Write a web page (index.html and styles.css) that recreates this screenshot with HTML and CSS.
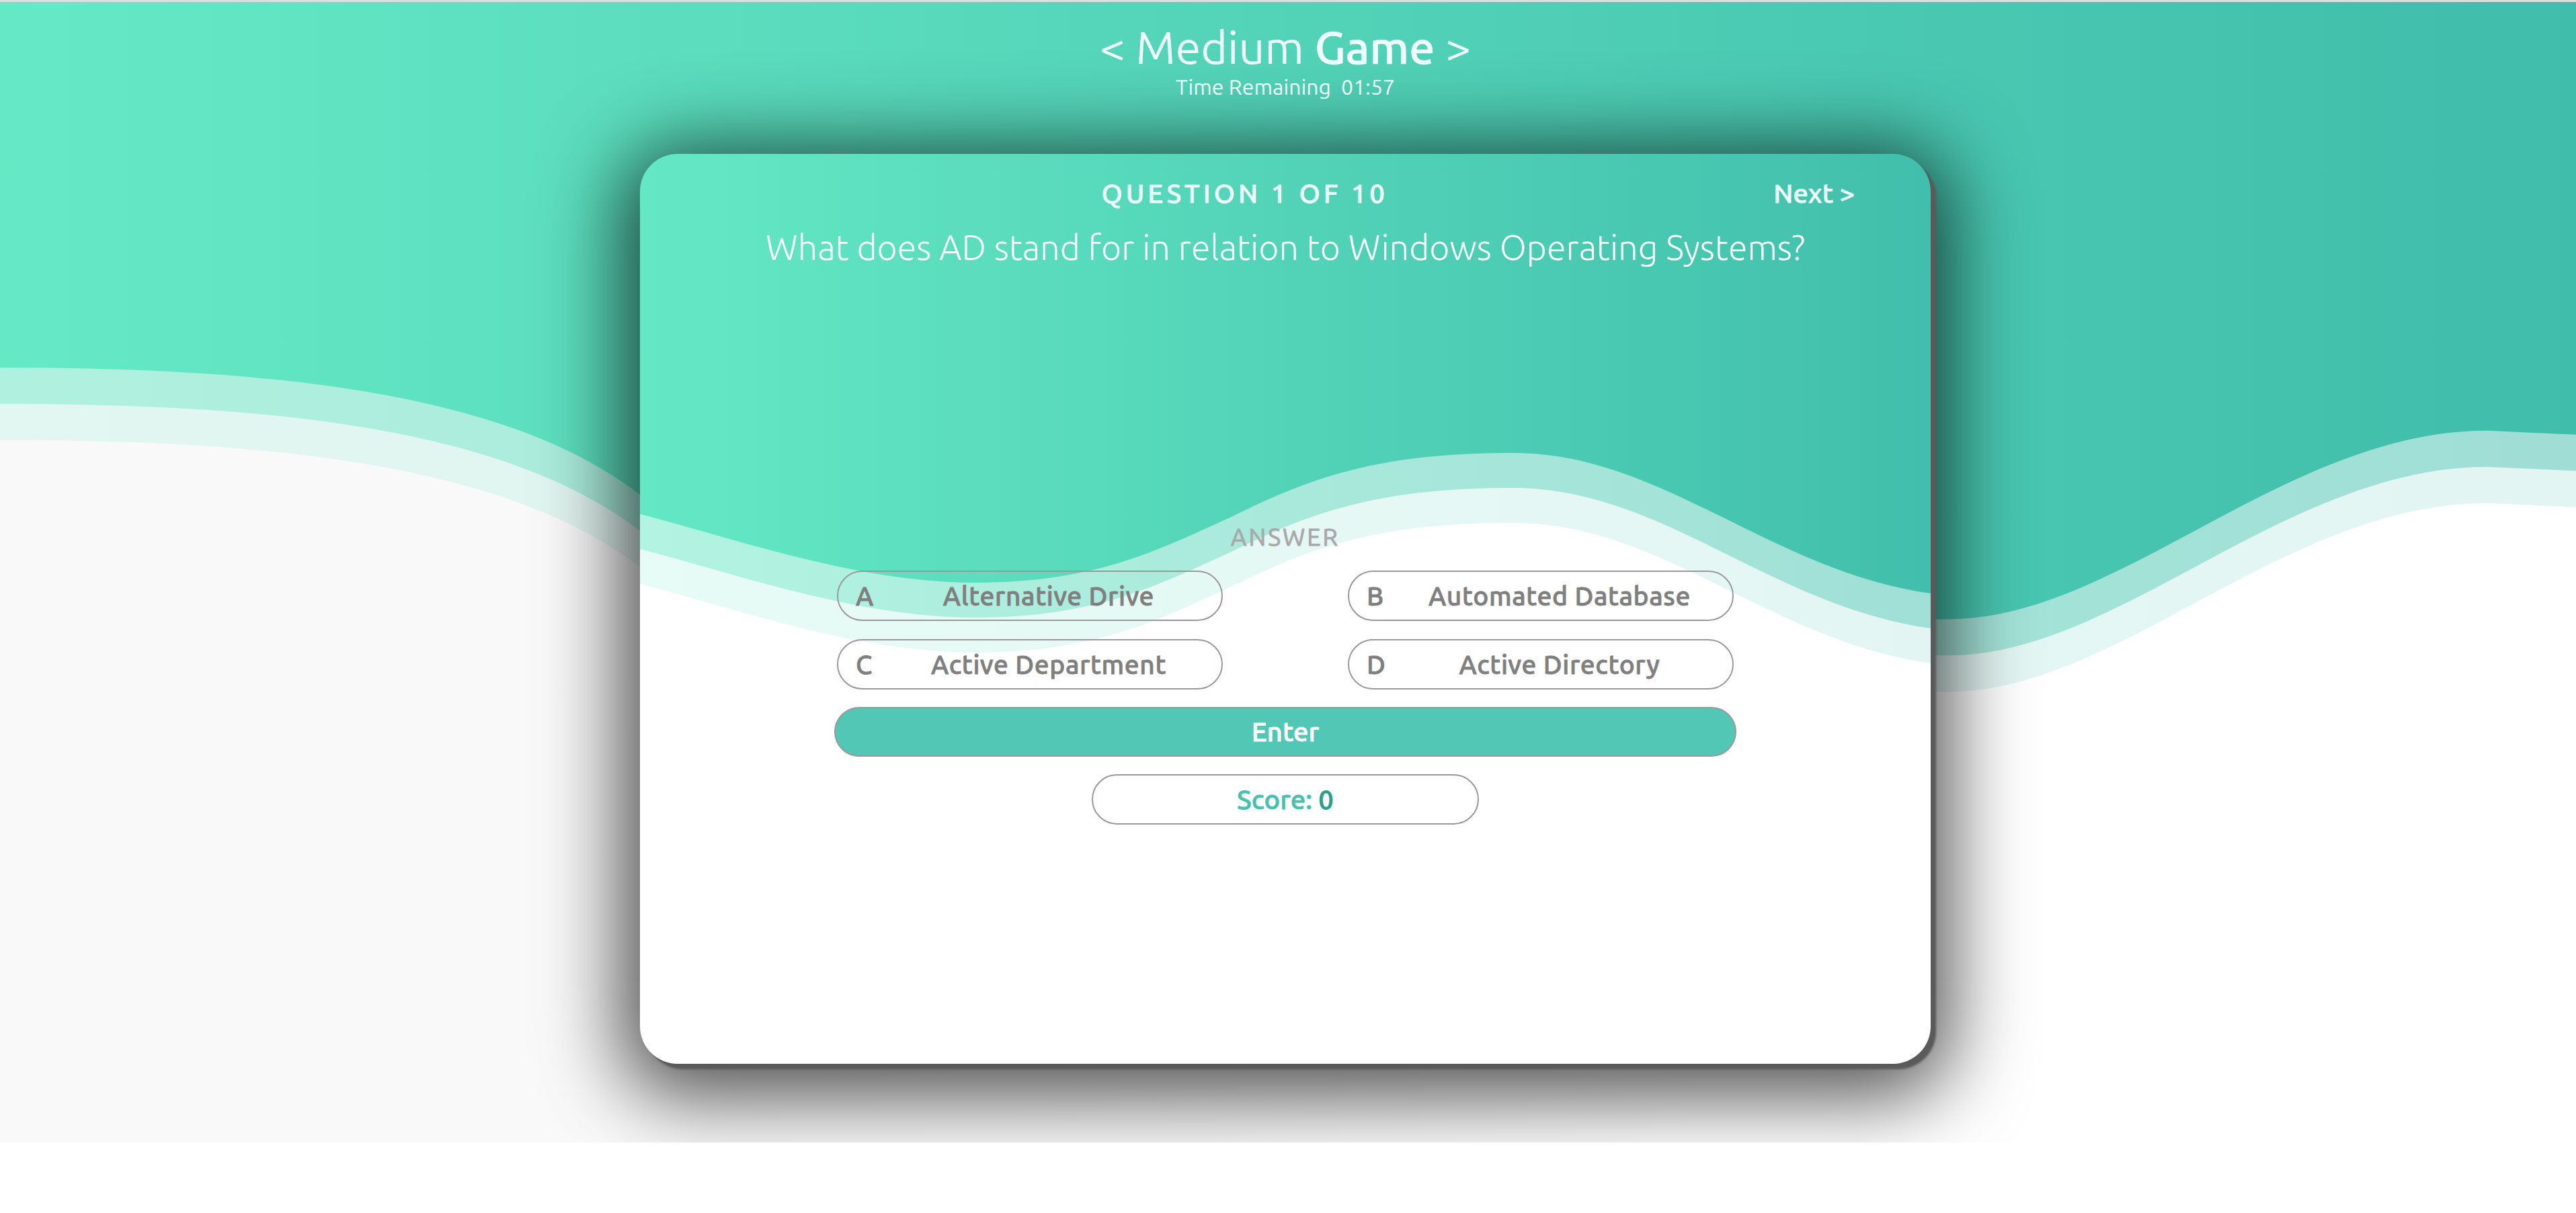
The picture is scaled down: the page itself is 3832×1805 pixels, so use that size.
FILE: index.html
```html
<!DOCTYPE html>
<html lang="en">
<head>
<meta charset="utf-8">
<title>Medium Game</title>
<link rel="stylesheet" href="styles.css">
</head>
<body>
<div class="scene">
  <header class="game-head">
    <h1 class="game-title">&lt; Medium <b>Game</b> &gt;</h1>
    <p class="timer"><span>Time Remaining</span><span>01:57</span></p>
  </header>
  <main class="card">
    <div class="card-head">
      <span class="spacer"></span>
      <span class="qcount">QUESTION 1 OF 10</span>
      <a class="next">Next &gt;</a>
    </div>
    <p class="question">What does AD stand for in relation to Windows Operating Systems?</p>
    <p class="answer-label">ANSWER</p>
    <div class="options">
      <button class="option"><span class="letter">A</span><span class="text">Alternative Drive</span></button>
      <button class="option"><span class="letter">B</span><span class="text">Automated Database</span></button>
      <button class="option"><span class="letter">C</span><span class="text">Active Department</span></button>
      <button class="option"><span class="letter">D</span><span class="text">Active Directory</span></button>
    </div>
    <button class="enter">Enter</button>
    <div class="score">Score:&nbsp;<span class="score-value">0</span></div>
  </main>
</div>
</body>
</html>
```

FILE: styles.css
```css
html, body {
  margin: 0;
  background: #ffffff;
}

body {
  font-family: "Ubuntu", "Open Sans", "Noto Sans", sans-serif;
}

.scene {
  height: 1700px;
  box-sizing: border-box;
  border-top: 3px solid #dedede;
  padding: 30px 8px 0 0;
  background:
    url("data:image/svg+xml;utf8,%3Csvg xmlns='http://www.w3.org/2000/svg' viewBox='0 0 3832 1700' preserveAspectRatio='none'%3E%3Cdefs%3E%3ClinearGradient id='g' x1='0' y1='0' x2='1' y2='0'%3E%3Cstop offset='0' stop-color='%2365e9c5'/%3E%3Cstop offset='1' stop-color='%2340bdab'/%3E%3C/linearGradient%3E%3C/defs%3E%3Cpath fill='url(%23g)' opacity='.15' transform='translate(0 108)' d='M0 0H3832V645L3700 639C3400 639 3150 920 2900 920L1500 920C1250 920 1100 848 950 733C750 580 400 545 0 545Z'/%3E%3Cpath fill='url(%23g)' opacity='.41' transform='translate(0 54)' d='M0 0H3832V645L3700 639C3400 639 3150 920 2900 920L1500 920C1250 920 1100 848 950 733C750 580 400 545 0 545Z'/%3E%3Cpath fill='url(%23g)' d='M0 0H3832V645L3700 639C3400 639 3150 920 2900 920L1500 920C1250 920 1100 848 950 733C750 580 400 545 0 545Z'/%3E%3C/svg%3E") 0 0 / 100% 100% no-repeat,
    linear-gradient(100deg, #f9f9f9 22%, #fbfbfb 50%, #ffffff 68%);
}

.game-head {
  text-align: center;
  color: #effffb;
}

.game-title {
  margin: 0;
  font-size: 68px;
  font-weight: 400;
  line-height: 1.1;
}

.game-title b {
  font-weight: 500;
  -webkit-text-stroke: 0.6px currentColor;
}

.timer {
  margin: 2px 0 0;
  display: flex;
  justify-content: center;
  gap: 15px;
  font-size: 32px;
  line-height: 1.2;
}

.card {
  width: 1920px;
  height: 1354px;
  box-sizing: border-box;
  margin: 80.5px auto 0;
  padding: 35px 113px 0;
  border-radius: 56px;
  background: #ffffff url("data:image/svg+xml;utf8,%3Csvg xmlns='http://www.w3.org/2000/svg' viewBox='0 0 1920 1354' preserveAspectRatio='none'%3E%3Cdefs%3E%3ClinearGradient id='c' x1='0' y1='0' x2='1' y2='0'%3E%3Cstop offset='0' stop-color='%2364e8c4'/%3E%3Cstop offset='1' stop-color='%2341bfac'/%3E%3C/linearGradient%3E%3C/defs%3E%3Cpath fill='url(%23c)' opacity='.15' transform='translate(0 104)' d='M0 0H1920V654C1680 620 1520 445 1300 445C1100 445 1000 480 880 540C770 590 680 636 508 638C330 640 150 575 0 536Z'/%3E%3Cpath fill='url(%23c)' opacity='.41' transform='translate(0 52)' d='M0 0H1920V654C1680 620 1520 445 1300 445C1100 445 1000 480 880 540C770 590 680 636 508 638C330 640 150 575 0 536Z'/%3E%3Cpath fill='url(%23c)' d='M0 0H1920V654C1680 620 1520 445 1300 445C1100 445 1000 480 880 540C770 590 680 636 508 638C330 640 150 575 0 536Z'/%3E%3C/svg%3E") 0 0 / 100% 100% no-repeat;
  box-shadow: 8px 8px 3px #5a5a5a, 0 20px 120px 27px rgba(0, 0, 0, 0.7);
  display: flex;
  flex-direction: column;
  align-items: center;
}

.card-head {
  align-self: stretch;
  display: flex;
  justify-content: space-between;
  align-items: baseline;
  font-size: 40px;
  line-height: 1.2;
  font-weight: 500;
  color: #effffb;
  -webkit-text-stroke: 0.7px currentColor;
}

.spacer {
  width: 0;
}

.qcount {
  letter-spacing: 5px;
}

.next {
  cursor: pointer;
}

.question {
  margin: 25.4px 0 0;
  font-size: 52px;
  font-weight: 300;
  line-height: 1.2;
  color: #f7fffd;
}

.answer-label {
  margin: 378px 0 0;
  font-size: 36px;
  line-height: 1.2;
  letter-spacing: 3px;
  color: #a9a9a9;
  -webkit-text-stroke: 1px currentColor;
}

.options {
  margin-top: 28.8px;
  display: grid;
  grid-template-columns: 574px 574px;
  column-gap: 186px;
  row-gap: 27px;
}

.option {
  height: 75px;
  box-sizing: border-box;
  border: 2px solid #999999;
  border-radius: 38px;
  background: transparent;
  display: flex;
  align-items: center;
  padding: 0 0 0 26px;
  font-family: inherit;
  font-size: 39px;
  font-weight: 500;
  line-height: 1;
  letter-spacing: 0.6px;
  color: #7f7f7f;
  -webkit-text-stroke: 0.8px currentColor;
}

.letter {
  width: 30px;
  text-align: left;
}

.text {
  flex: 1;
  text-align: center;
}

.enter {
  margin-top: 26px;
  width: 1342px;
  height: 74px;
  box-sizing: border-box;
  border: 2px solid #999999;
  border-radius: 37px;
  background: #53c7b5;
  color: #ffffff;
  font-family: inherit;
  font-size: 40px;
  font-weight: 500;
  line-height: 1;
  -webkit-text-stroke: 0.8px currentColor;
}

.score {
  margin-top: 26px;
  width: 576px;
  height: 75px;
  box-sizing: border-box;
  border: 2px solid #999999;
  border-radius: 38px;
  display: flex;
  align-items: center;
  justify-content: center;
  font-size: 40px;
  font-weight: 500;
  color: #45c1ad;
  -webkit-text-stroke: 0.8px currentColor;
}

.score-value {
  color: #2c9c8b;
}
```
